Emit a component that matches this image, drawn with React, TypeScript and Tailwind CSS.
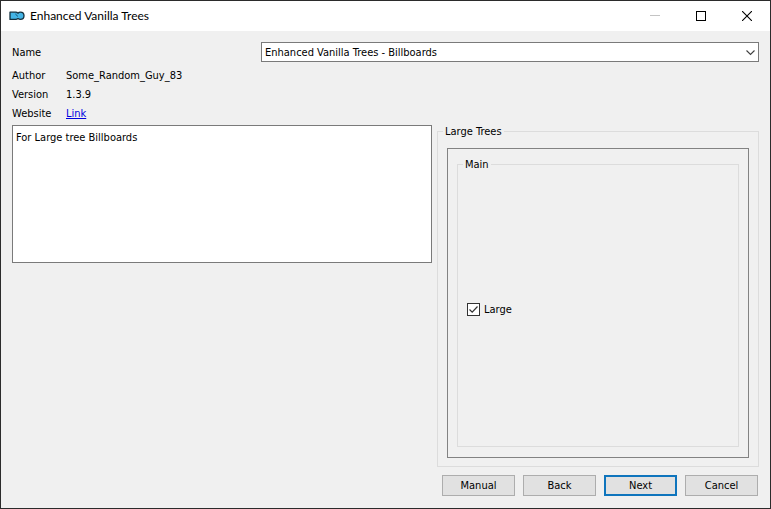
import React from "react";

function AppIcon() {
  return (
    <svg width="16" height="10" viewBox="0 0 16 10" aria-hidden="true">
      <path
        d="M1 1.200h5.800c.9 0 1.600.4 2.100 1 .6-.6 1.500-1 2.500-1 2.100 0 3.600 1.500 3.600 3.600s-1.500 3.600-3.600 3.600c-1 0-1.800-.3-2.400-.8-.6.5-1.300.8-2.200.8H1z"
        fill="#43b4e6"
        stroke="#12303f"
        strokeWidth="1.300"
        strokeLinejoin="round"
      />
      <path d="M6.800 2.600C6.900 4 7.600 5 9 5.200" fill="none" stroke="#1b5c7c" strokeWidth="1" />
    </svg>
  );
}

function TitleBar() {
  return (
    <header className="flex h-[30px] items-center bg-white pl-2">
      <AppIcon />
      <h1 className="ml-[5px] flex-1 font-[Lato,sans-serif] text-[12px] leading-4 text-black">
        Enhanced Vanilla Trees
      </h1>
      <button type="button" aria-label="Minimize" disabled className="flex h-full w-[46px] items-center justify-center">
        <svg width="10" height="10" viewBox="0 0 10 10" shapeRendering="crispEdges">
          <path d="M0 4.500h10" stroke="#c4c4c4" />
        </svg>
      </button>
      <button type="button" aria-label="Maximize" className="flex h-full w-[46px] items-center justify-center">
        <svg width="10" height="10" viewBox="0 0 10 10" shapeRendering="crispEdges">
          <path d="M.5.5h9v9h-9z" fill="none" stroke="#000" />
        </svg>
      </button>
      <button type="button" aria-label="Close" className="flex h-full w-[46px] items-center justify-center">
        <svg width="10" height="10" viewBox="0 0 10 10">
          <path d="M0 0l10 10M10 0L0 10" fill="none" stroke="#000" strokeWidth="1.100" />
        </svg>
      </button>
    </header>
  );
}

function Group({ title, children }: { title: string; children: React.ReactNode }) {
  return (
    <fieldset className="flex min-w-0 flex-1 flex-col border border-[#dcdcdc]">
      <legend className="ml-[5px] px-[2px] leading-[13px]">{title}</legend>
      {children}
    </fieldset>
  );
}

function InfoRow({ label, children }: { label: string; children: React.ReactNode }) {
  return (
    <div className="flex h-[19px] items-center">
      <dt className="w-[54px]">{label}</dt>
      <dd>{children}</dd>
    </div>
  );
}

function CheckBox({ id, label }: { id: string; label: string }) {
  return (
    <div className="flex items-center gap-1">
      <span className="grid size-[13px]">
        <input
          id={id}
          type="checkbox"
          defaultChecked
          className="peer col-start-1 row-start-1 size-[13px] appearance-none border border-[#333333] bg-white"
        />
        <svg
          width="13"
          height="13"
          viewBox="0 0 13 13"
          aria-hidden="true"
          className="pointer-events-none invisible col-start-1 row-start-1 peer-checked:visible"
        >
          <path d="M2.500 6.500l2.700 2.700 5.300-5.700" fill="none" stroke="#333" strokeWidth="1.200" />
        </svg>
      </span>
      <label htmlFor={id}>{label}</label>
    </div>
  );
}

function DialogButton({ children, primary = false }: { children: React.ReactNode; primary?: boolean }) {
  return (
    <button
      type="button"
      className={
        primary
          ? "h-[21px] w-[73px] border-2 border-[#0f75bd] bg-[#e1e1e1]"
          : "h-[21px] w-[73px] border border-[#adadad] bg-[#e1e1e1]"
      }
    >
      {children}
    </button>
  );
}

export default function App() {
  return (
    <div className="flex min-h-screen flex-col border border-[#2b2b2b] bg-[#f0f0f0] font-['DejaVu_Sans_Condensed','DejaVu_Sans',sans-serif] text-[11px] leading-[13px] text-black">
      <TitleBar />
      <main className="flex flex-1 flex-col px-[11px] pb-3 pt-[11px]">
        <div className="grid grid-cols-[1fr_2fr] items-center">
          <label htmlFor="step">Name</label>
          <div className="relative">
            <select id="step" className="block h-5 w-full appearance-none border border-[#7a7a7a] bg-white pl-[3px] pr-5">
              <option>Enhanced Vanilla Trees - Billboards</option>
            </select>
            <svg className="pointer-events-none absolute right-1 top-2" width="9" height="6" viewBox="0 0 9 6">
              <path d="M.5.5l4 4 4-4" fill="none" stroke="#404040" strokeWidth="1.100" />
            </svg>
          </div>
        </div>

        <dl className="mt-1">
          <InfoRow label="Author">Some_Random_Guy_83</InfoRow>
          <InfoRow label="Version">1.3.9</InfoRow>
          <InfoRow label="Website">
            <a href="#website" className="text-[#0000e0] underline">Link</a>
          </InfoRow>
        </dl>

        <div className="mt-[2px] grid flex-1 grid-cols-[420fr_322fr] gap-[5px]">
          <textarea
            readOnly
            aria-label="Description"
            defaultValue="For Large tree Billboards"
            className="block h-[138px] w-full resize-none border border-[#7a7a7a] bg-white px-[3px] py-[5px]"
          />
          <div className="flex min-w-0 flex-col">
            <Group title="Large Trees">
              <div className="flex flex-1 flex-col px-[9px] pb-2 pt-[10px]">
                <div className="flex flex-1 flex-col border border-[#828282] px-[9px] pb-[10px] pt-[9px]">
                  <Group title="Main">
                    <div className="flex flex-1 items-center px-[9px] pt-[2px]">
                      <CheckBox id="large" label="Large" />
                    </div>
                  </Group>
                </div>
              </div>
            </Group>
          </div>
        </div>

        <div className="mt-2 flex justify-end gap-2 pr-px">
          <DialogButton>Manual</DialogButton>
          <DialogButton>Back</DialogButton>
          <DialogButton primary>Next</DialogButton>
          <DialogButton>Cancel</DialogButton>
        </div>
      </main>
    </div>
  );
}
